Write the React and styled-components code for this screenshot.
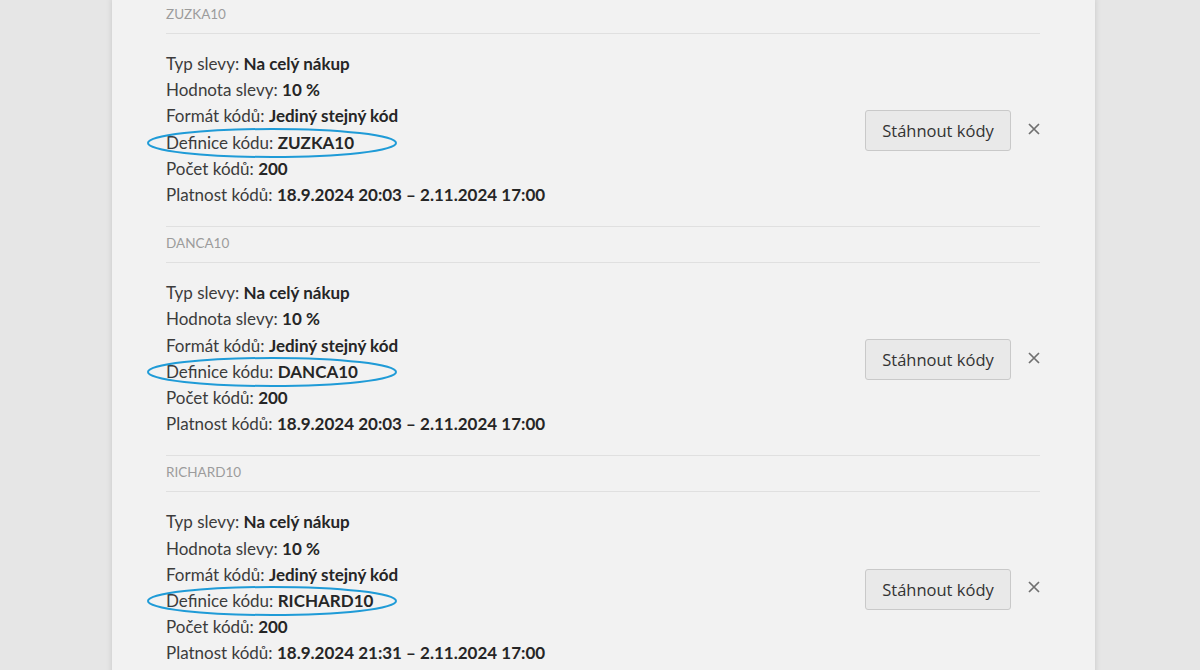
import React from 'react';
import styled, { createGlobalStyle } from 'styled-components';

const codes = [
    { name: 'ZUZKA10', start: '18.9.2024 20:03' },
    { name: 'DANCA10', start: '18.9.2024 20:03' },
    { name: 'RICHARD10', start: '18.9.2024 21:31' },
];

export default function App() {
    return (
        <>
            <GlobalStyle />
            <Panel>
                <List>
                    {codes.map(code => (
                        <Section key={code.name}>
                            <Title>{code.name}</Title>
                            <Body>
                                <Info>
                                    <Row>Typ slevy: <b>Na celý nákup</b></Row>
                                    <Row>Hodnota slevy: <b>10 %</b></Row>
                                    <Row>Formát kódů: <b>Jediný stejný kód</b></Row>
                                    <Row>
                                        <Mark width="252" height="32" viewBox="0 0 252 32">
                                            <ellipse cx="126" cy="16" rx="124" ry="14" fill="none" stroke="#1f9bd7" strokeWidth="2" />
                                        </Mark>
                                        Definice kódu: <b>{code.name}</b>
                                    </Row>
                                    <Row>Počet kódů: <b>200</b></Row>
                                    <Row>Platnost kódů: <b>{code.start} – 2.11.2024 17:00</b></Row>
                                </Info>
                                <Actions>
                                    <Button type="button">Stáhnout kódy</Button>
                                    <Remove aria-label="Odstranit">
                                        <svg width="12" height="12" viewBox="0 0 12 12">
                                            <path d="M1 1 L11 11 M11 1 L1 11" stroke="#707070" strokeWidth="1.7" />
                                        </svg>
                                    </Remove>
                                </Actions>
                            </Body>
                        </Section>
                    ))}
                </List>
            </Panel>
        </>
    );
}

const GlobalStyle = createGlobalStyle`
    body {
        margin: 0;
        background: #e6e6e6;
        font-family: Lato, "Open Sans", sans-serif;
        overflow: hidden;
    }
`;

const Panel = styled.div`
    width: 983px;
    min-height: 100vh;
    margin-left: 112px;
    padding: 0 55px 0 54px;
    box-sizing: border-box;
    background: #f2f2f2;
    box-shadow: 0 0 6px rgba(0, 0, 0, 0.14);
`;

const List = styled.div`
    margin-top: -2px;
`;

const Section = styled.div`
    border-bottom: 1px solid #e0e0e0;
`;

const Title = styled.div`
    padding: 7px 0 9px;
    line-height: 19px;
    font-size: 13.5px;
    color: #9c9c9c;
    border-bottom: 1px solid #e0e0e0;
`;

const Body = styled.div`
    display: flex;
    align-items: center;
    justify-content: space-between;
    padding: 17px 0 18px;
`;

const Info = styled.div`
    display: flex;
    flex-direction: column;
`;

const Row = styled.div`
    position: relative;
    line-height: 26.2px;
    font-size: 17px;
    color: #3c3c3c;
    b {
        font-weight: 700;
        color: #262626;
    }
`;

const Mark = styled.svg`
    position: absolute;
    left: -20px;
    top: -3px;
    pointer-events: none;
`;

const Actions = styled.div`
    display: flex;
    align-items: center;
    gap: 17px;
    margin-top: 2px;
`;

const Button = styled.button`
    width: 146px;
    height: 41px;
    border: 1px solid #c9c9c9;
    border-radius: 3px;
    background: #e9e9e9;
    color: #333;
    font-family: "Open Sans", sans-serif;
    font-size: 16.5px;
    cursor: pointer;
`;

const Remove = styled.span`
    display: flex;
    width: 12px;
    height: 12px;
    margin-top: -4px;
`;
